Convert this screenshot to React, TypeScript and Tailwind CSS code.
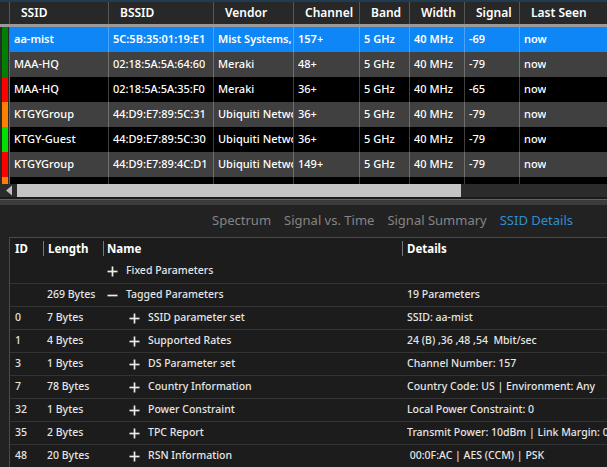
import React from "react";

type Net = {
  ssid: string;
  bssid: string;
  vendor: string;
  channel: string;
  signal: string;
  color: string;
};

const nets: Net[] = [
  { ssid: "aa-mist", bssid: "5C:5B:35:01:19:E1", vendor: "Mist Systems, Inc.", channel: "157+", signal: "-69", color: "bg-[#008000]" },
  { ssid: "MAA-HQ", bssid: "02:18:5A:5A:64:60", vendor: "Meraki", channel: "48+", signal: "-79", color: "bg-[#008000]" },
  { ssid: "MAA-HQ", bssid: "02:18:5A:5A:35:F0", vendor: "Meraki", channel: "36+", signal: "-65", color: "bg-[#ff0000]" },
  { ssid: "KTGYGroup", bssid: "44:D9:E7:89:5C:31", vendor: "Ubiquiti Networks", channel: "36+", signal: "-79", color: "bg-[#ff8000]" },
  { ssid: "KTGY-Guest", bssid: "44:D9:E7:89:5C:30", vendor: "Ubiquiti Networks", channel: "36+", signal: "-79", color: "bg-[#00e000]" },
  { ssid: "KTGYGroup", bssid: "44:D9:E7:89:4C:D1", vendor: "Ubiquiti Networks", channel: "149+", signal: "-79", color: "bg-[#ff0000]" },
];

const cols = [
  { label: "SSID", w: "w-[98px]" },
  { label: "BSSID", w: "w-[105px]" },
  { label: "Vendor", w: "w-[80px]" },
  { label: "Channel", w: "w-[66px]" },
  { label: "Band", w: "w-[50px]" },
  { label: "Width", w: "w-[55px]" },
  { label: "Signal", w: "w-[55px]" },
  { label: "Last Seen", w: "flex-1" },
];

type Param = {
  id?: string;
  len?: string;
  level: 1 | 2;
  open?: boolean;
  name: string;
  details?: string;
};

const params: Param[] = [
  { level: 1, name: "Fixed Parameters" },
  { len: "269 Bytes", level: 1, open: true, name: "Tagged Parameters", details: "19 Parameters" },
  { id: "0", len: "7 Bytes", level: 2, name: "SSID parameter set", details: "SSID: aa-mist" },
  { id: "1", len: "4 Bytes", level: 2, name: "Supported Rates", details: "24 (B) ,36 ,48 ,54 \u00a0Mbit/sec" },
  { id: "3", len: "1 Bytes", level: 2, name: "DS Parameter set", details: "Channel Number: 157" },
  { id: "7", len: "78 Bytes", level: 2, name: "Country Information", details: "Country Code: US | Environment: Any" },
  { id: "32", len: "1 Bytes", level: 2, name: "Power Constraint", details: "Local Power Constraint: 0" },
  { id: "35", len: "2 Bytes", level: 2, name: "TPC Report", details: "Transmit Power: 10dBm | Link Margin: 0" },
  { id: "48", len: "20 Bytes", level: 2, name: "RSN Information", details: "\u00a000:0F:AC | AES (CCM) | PSK" },
];

const Toggle = ({ open }: { open?: boolean }) => (
  <svg width="11" height="11" viewBox="0 0 11 11" className="shrink-0">
    <path d="M0.5 5.5H10.5" stroke="#ececec" strokeWidth="1.7" />
    {!open && <path d="M5.5 0.5V10.5" stroke="#ececec" strokeWidth="1.7" />}
  </svg>
);

const NetRow = ({ net, i }: { net?: Net; i: number }) => {
  const bg = i === 0 ? "bg-[#0f86f6]" : i % 2 === 1 ? "bg-[#404040]" : "bg-black";
  const cells = net
    ? [net.ssid, net.bssid, net.vendor, net.channel, "5 GHz", "40 MHz", net.signal, "now"]
    : ["", "", "", "", "", "", "", ""];
  const color = net ? net.color : "bg-[#ff8000]";
  return (
    <div className={`flex h-[25px] shrink-0 ${bg}`}>
      <div className="w-[10px] shrink-0 bg-[#2a2a2a] pl-[2px] pr-[1px] border-r border-[#6a6a6a]">
        <div className={`h-full ${color}`} />
      </div>
      {cols.map((c, j) => (
        <div
          key={j}
          className={`${c.w} shrink-0 overflow-hidden whitespace-nowrap pl-[4px] flex items-center text-white ${
            j > 0 ? "border-l border-white/25" : ""
          } ${i === 0 ? "font-semibold" : "font-medium"}`}
        >
          <span className="overflow-hidden">{cells[j]}</span>
        </div>
      ))}
    </div>
  );
};

export default function App() {
  return (
    <div
      className="w-[607px] h-[467px] overflow-hidden bg-[#222222] flex flex-col text-[11px]"
      style={{ fontFamily: '"Noto Sans", "Open Sans", sans-serif' }}
    >
      {/* network list */}
      <div className="h-[2px] bg-[#1f3c52] shrink-0" />
      <div className="flex h-[22px] shrink-0 bg-[#282828] text-white font-semibold text-[12px]">
        <div className="w-[10px] shrink-0 border-r border-[#555]" />
        {cols.map((c, j) => (
          <div
            key={j}
            className={`${c.w} shrink-0 pl-[11px] flex items-center whitespace-nowrap ${j > 0 ? "border-l border-[#555]" : ""}`}
          >
            {c.label}
          </div>
        ))}
      </div>
      <div className="h-[3px] bg-[#9a9a9a] shrink-0" />
      <div className="h-[157px] overflow-hidden flex flex-col shrink-0">
        {nets.map((n, i) => (
          <NetRow key={i} net={n} i={i} />
        ))}
        <NetRow i={6} />
      </div>
      <div className="flex h-[13px] shrink-0 bg-[#2b2b2b]">
        <div className="w-[17px] flex items-center justify-center">
          <svg width="8" height="11" viewBox="0 0 8 11">
            <path d="M1 5.5L7 0.5V10.5Z" fill="#bdbdbd" />
          </svg>
        </div>
        <div className="w-[444px] bg-[#c4c4c4]" />
      </div>
      <div className="h-[2px] bg-[#1a1a1a] shrink-0" />
      <div className="h-[1px] bg-[#1c78b0] shrink-0" />
      <div className="h-[5px] bg-[#3b3b3b] shrink-0" />

      {/* tabs */}
      <div className="h-[32px] shrink-0 flex items-center justify-end gap-[13px] pr-[34px] text-[13px] text-[#858585]">
        <span>Spectrum</span>
        <span>Signal vs. Time</span>
        <span>Signal Summary</span>
        <span className="text-[#2f8fd2]">SSID Details</span>
      </div>

      {/* details table */}
      <div className="flex-1 ml-[9px] border-l border-t border-[#4a4a4a] bg-[#1c1c1c] text-[10.5px] font-medium text-[#e6e6e6]">
        <div className="flex h-[21px] text-white font-bold text-[11.5px]">
          <div className="w-[33px] pl-[5px] flex items-center">ID</div>
          <div className="w-[60px] pl-[4px] flex items-center border-l border-[#777] my-[3px]">Length</div>
          <div className="w-[299px] pl-[3px] flex items-center border-l border-[#777] my-[3px]">Name</div>
          <div className="flex-1 pl-[4px] flex items-center border-l border-[#777] my-[3px]">Details</div>
        </div>
        {params.map((p, i) => (
          <div
            key={i}
            className={`flex h-[23px] items-center whitespace-nowrap ${i > 0 ? "border-t border-[#333]" : "h-[24px]"}`}
          >
            <div className="w-[33px] pl-[5px] shrink-0">{p.id}</div>
            <div className="w-[60px] pl-[4px] shrink-0">{p.len}</div>
            <div className={`w-[299px] shrink-0 flex items-center gap-[8px] ${p.level === 1 ? "pl-[4px]" : "pl-[26px]"}`}>
              <Toggle open={p.open} />
              <span>{p.name}</span>
            </div>
            <div className="flex-1 pl-[5px] overflow-hidden">{p.details}</div>
          </div>
        ))}
      </div>
    </div>
  );
}
